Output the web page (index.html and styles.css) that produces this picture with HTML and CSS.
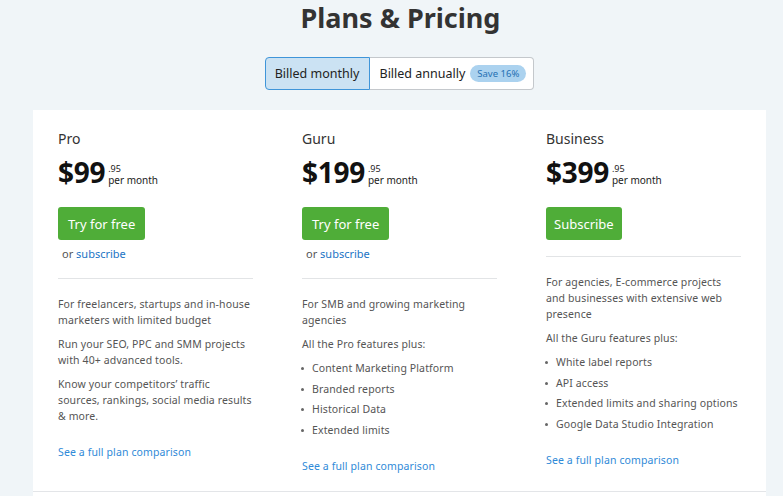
FILE: index.html
```html
<!DOCTYPE html>
<html>
<head>
<meta charset="utf-8">
<link rel="stylesheet" href="styles.css">
</head>
<body>
<h1 class="title">Plans &amp; Pricing</h1>
<div class="toggle-wrap">
  <div class="toggle">
    <span class="seg seg-active">Billed monthly</span>
    <span class="seg seg-annual">Billed annually <span class="badge">Save 16%</span></span>
  </div>
</div>
<div class="card">
  <div class="plans">
    <div class="plan">
      <div class="plan-name">Pro</div>
      <div class="price"><span class="amount">$99</span><span class="cents"><span class="c">.95</span><span class="per">per month</span></span></div>
      <a class="btn">Try for free</a>
      <div class="alt">or <a class="link">subscribe</a></div>
      <hr class="div">
      <p class="txt">For freelancers, startups and in‑house marketers with limited budget</p>
      <p class="txt">Run your SEO, PPC and SMM projects with 40+ advanced tools.</p>
      <p class="txt">Know your competitors’ traffic sources, rankings, social media results &amp; more.</p>
      <a class="cmp">See a full plan comparison</a>
    </div>
    <div class="plan">
      <div class="plan-name">Guru</div>
      <div class="price"><span class="amount">$199</span><span class="cents"><span class="c">.95</span><span class="per">per month</span></span></div>
      <a class="btn">Try for free</a>
      <div class="alt">or <a class="link">subscribe</a></div>
      <hr class="div">
      <p class="txt">For SMB and growing marketing agencies</p>
      <p class="txt">All the Pro features plus:</p>
      <ul class="feat">
        <li>Content Marketing Platform</li>
        <li>Branded reports</li>
        <li>Historical Data</li>
        <li>Extended limits</li>
      </ul>
      <a class="cmp">See a full plan comparison</a>
    </div>
    <div class="plan">
      <div class="plan-name">Business</div>
      <div class="price"><span class="amount">$399</span><span class="cents"><span class="c">.95</span><span class="per">per month</span></span></div>
      <a class="btn btn-narrow">Subscribe</a>
      <hr class="div">
      <p class="txt">For agencies, E-commerce projects and businesses with extensive web presence</p>
      <p class="txt">All the Guru features plus:</p>
      <ul class="feat">
        <li>White label reports</li>
        <li>API access</li>
        <li>Extended limits and sharing options</li>
        <li>Google Data Studio Integration</li>
      </ul>
      <a class="cmp">See a full plan comparison</a>
    </div>
  </div>
  <div class="more"></div>
</div>
</body>
</html>
```
FILE: styles.css
```css
html, body {
  margin: 0;
  padding: 0;
  background: #f0f5f8;
  font-family: "Noto Sans", "Open Sans", sans-serif;
  color: #333;
}
.title {
  margin: 0;
  padding: 1px 0 0 18px;
  text-align: center;
  font-size: 27px;
  line-height: 34px;
  font-weight: 700;
  color: #333;
}
.toggle-wrap {
  display: flex;
  justify-content: center;
  margin-top: 22px;
  padding-left: 15px;
}
.toggle {
  display: flex;
  height: 33px;
  box-sizing: border-box;
}
.seg {
  display: flex;
  align-items: center;
  font-size: 12.5px;
  color: #222;
  box-sizing: border-box;
  height: 33px;
}
.seg-active {
  width: 105px;
  justify-content: center;
  background: #cbe2f3;
  border: 1px solid #3f95d9;
  border-radius: 4px 0 0 4px;
}
.seg-annual {
  width: 164px;
  padding-left: 10px;
  background: #fff;
  border: 1px solid #c4c8cc;
  border-left: none;
  border-radius: 0 4px 4px 0;
}
.badge {
  margin-left: 5px;
  background: #abd2ef;
  color: #2470b3;
  font-size: 9.5px;
  padding: 2px 7px;
  border-radius: 9px;
  line-height: 13px;
}
.card {
  margin-top: 20px;
  margin-left: 33px;
  width: 733px;
  background: #fff;
  height: 400px;
}
.plans {
  display: flex;
  gap: 49px;
  padding: 20px 25px 17px;
  border-bottom: 1px solid #e3e5e8;
}
.plan {
  width: 195px;
  display: flex;
  flex-direction: column;
  align-items: flex-start;
}
.plan-name {
  font-size: 14px;
  line-height: 18px;
  color: #333;
}
.price {
  display: flex;
  align-items: flex-start;
  margin-top: 8px;
  height: 32px;
}
.amount {
  font-size: 28px;
  font-weight: 700;
  line-height: 32px;
  color: #111;
  letter-spacing: -0.3px;
}
.cents {
  display: flex;
  flex-direction: column;
  margin-left: 3px;
  margin-top: 8px;
}
.c {
  font-size: 9px;
  line-height: 10px;
  color: #222;
}
.per {
  font-size: 10px;
  line-height: 13px;
  color: #222;
}
.btn {
  margin-top: 19px;
  height: 33px;
  padding: 0 10px;
  display: flex;
  align-items: center;
  background: #4fad38;
  color: #fff;
  font-size: 13px;
  border-radius: 3px;
}
.btn-narrow {
  padding: 0 8px;
}
.alt {
  margin-top: 6px;
  margin-left: 4px;
  font-size: 11px;
  line-height: 16px;
  color: #555;
}
.link {
  color: #1b74c5;
}
.div {
  width: 195px;
  margin: 16px 0 0;
  border: none;
  border-top: 1px solid #e2e4e6;
}
.txt {
  margin: 17px 0 0;
  font-size: 10.5px;
  letter-spacing: 0.12px;
  line-height: 16px;
  color: #555;
}
.txt + .txt {
  margin-top: 8px;
}
.feat {
  list-style: none;
  margin: 8px 0 0;
  padding: 0 0 0 10px;
}
.feat li {
  position: relative;
  font-size: 10.5px;
  letter-spacing: 0.12px;
  line-height: 16px;
  color: #555;
  margin-bottom: 4.6px;
}
.feat li::before {
  content: "";
  position: absolute;
  left: -11px;
  top: 7px;
  width: 3px;
  height: 3px;
  border-radius: 50%;
  background: #666;
}
.cmp {
  margin-top: 20px;
  font-size: 10.5px;
  letter-spacing: 0.12px;
  line-height: 16px;
  color: #2f8ad8;
}
.feat + .cmp {
  margin-top: 16px;
}
```
